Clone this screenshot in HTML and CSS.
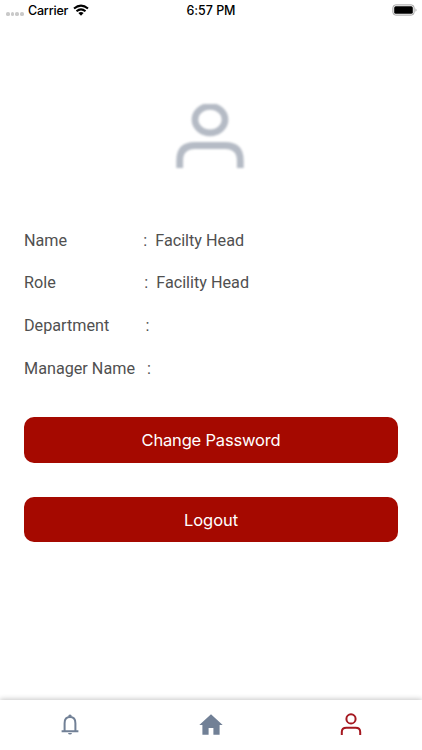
FILE: index.html
```html
<!DOCTYPE html>
<html lang="en">
<head>
<meta charset="utf-8">
<title>Profile</title>
<link rel="stylesheet" href="styles.css">
</head>
<body>
<div class="screen">
  <header class="status">
    <div class="carrier">
      <span class="signal"><i></i><i></i><i></i><i></i></span>
      <span class="carrier-name">Carrier</span>
      <svg class="wifi" viewBox="0 0 16 12" width="16" height="12"><g fill="none" stroke="#000" stroke-width="2.1"><path d="M1 4.5Q8-1.2 15 4.5"/><path d="M3.5 7.3Q8 3.5 12.5 7.3"/></g><path d="M5.4 9Q8 7 10.6 9L8 11.7Z"/></svg>
    </div>
    <time class="clock">6:57 PM</time>
    <svg class="battery" viewBox="0 0 26 12" width="26" height="12"><rect x=".9" y=".9" width="21.2" height="10.2" rx="2.8" fill="#fff" stroke="#a2a2a2"/><rect x="2.2" y="2.2" width="18.6" height="7.6" rx="1.5"/><path d="M23.5 4.2q2 1.8 0 3.6z" fill="#a2a2a2"/></svg>
  </header>
  <main class="profile">
    <svg class="avatar" viewBox="0 0 68 64" width="68" height="64"><g fill="none" stroke="#b5bbc5" stroke-width="6.8"><ellipse cx="34" cy="15.6" rx="15" ry="13.2"/><path d="M3.7 66V56.5Q3.7 41.5 19 41.5H49Q64.3 41.5 64.3 56.5V66"/></g></svg>
    <dl class="details">
      <div class="row"><dt class="name">Name</dt><dd>:<span>Facilty Head</span></dd></div>
      <div class="row"><dt class="role">Role</dt><dd>:<span>Facility Head</span></dd></div>
      <div class="row"><dt class="department">Department</dt><dd>:</dd></div>
      <div class="row"><dt class="manager">Manager Name</dt><dd>:</dd></div>
    </dl>
    <div class="actions">
      <button class="button change">Change Password</button>
      <button class="button logout">Logout</button>
    </div>
  </main>
  <nav class="tabs">
    <a><svg viewBox="0 0 24 24" width="24" height="24" fill="none" stroke="#718096" stroke-width="2"><path d="M6.6 18.2V10.2C6.6 6.4 8.8 4.1 12 4.1S17.4 6.4 17.4 10.2V18.2M3.6 18.2H20.4"/><path d="M10.2 3.7Q10.2 1.5 12 1.5T13.8 3.7ZM10 20H14Q13.7 21.5 12 21.5T10 20Z" fill="#718096" stroke="none"/></svg></a>
    <a><svg viewBox="0 0 24 24" width="24" height="24" fill="#718096"><path d="M12 1.3 .3 12.1H3.4V21.7H9.6V15H14.4V21.7H20.6V12.1H23.7Z"/></svg></a>
    <a><svg class="person" viewBox="0 0 24 24" width="24" height="24" fill="none" stroke="#a51820" stroke-width="2"><circle cx="12" cy="5.9" r="4.6"/><path d="M2.8 22V19Q2.8 14.7 7.4 14.7H16.6Q21.2 14.7 21.2 19V22"/></svg></a>
  </nav>
</div>
</body>
</html>
```
FILE: styles.css
```css
* { box-sizing: border-box; }
body { margin: 0; background: #fff; font-family: Roboto, sans-serif; }
.screen { width: 422px; height: 750px; display: flex; flex-direction: column; overflow: hidden; }
.status { height: 20px; padding: 1px 4px 0 6px; display: grid; grid-template-columns: 1fr auto 1fr; align-items: center; font: 500 12.5px/20px Inter, sans-serif; color: #000; }
.carrier { display: flex; align-items: center; }
.carrier-name { letter-spacing: -.2px; }
.signal { display: flex; gap: 1px; width: 22px; padding-top: 6px; }
.signal i { width: 3.7px; height: 3.7px; border-radius: 50%; background: #c9c9c9; }
.wifi { margin: 0 0 2px 5px; }
.clock { margin-right: 2px; letter-spacing: -.05px; }
.battery { justify-self: end; margin-bottom: 2px; }
.profile { flex: 1; padding: 84px 24px 0; }
.avatar { display: block; margin: 0 auto 0 152px; filter: blur(1.3px); }
.details { margin: 51.6px 0 0; color: #505050; font-size: 16.2px; line-height: 42.75px; }
.row { display: flex; height: 42.75px; }
dt { white-space: nowrap; }
.name { width: 119.3px; }
.role { width: 120.3px; }
.department { width: 121.5px; }
.manager { width: 123px; }
dd { margin: 0; }
dd span { margin-left: 8px; }
.actions { display: flex; flex-direction: column; gap: 34px; margin-top: 26.4px; }
.button { border: 0; padding: 0; border-radius: 10px; background: #a50900; color: #fff; font: 400 16.5px/20px Inter, sans-serif; }
.change { height: 46px; letter-spacing: -.18px; }
.logout { height: 45px; padding-top: 1px; letter-spacing: -.05px; }
.tabs { height: 50px; display: grid; grid-template-columns: repeat(3, 1fr); background: #fff; box-shadow: 0 -1px 5px rgba(0,0,0,.22); }
.tabs a { display: flex; align-items: center; justify-content: center; }
.person { margin-right: 1px; }
```
